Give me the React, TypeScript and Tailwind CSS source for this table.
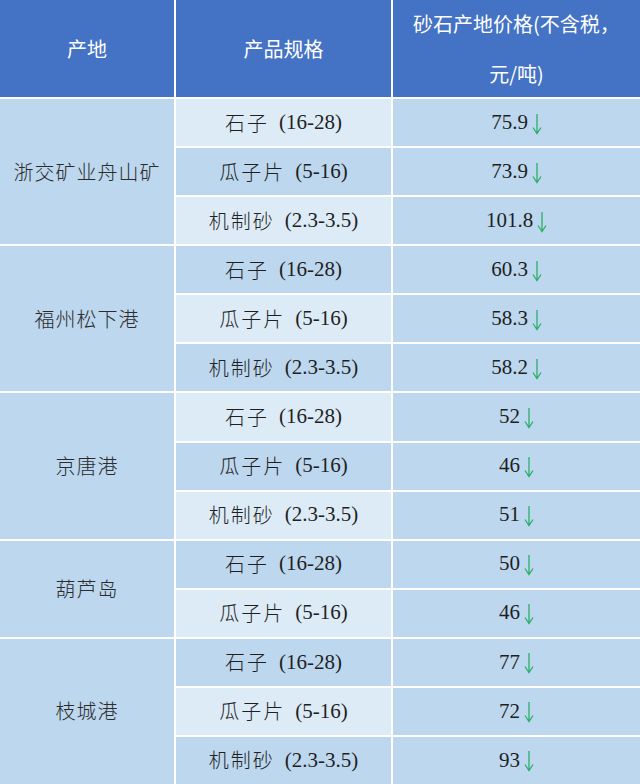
import React from 'react';

type Group = { origin: string; items: { spec: string; range: string; price: string }[] };

const groups: Group[] = [
  {
    origin: '浙交矿业舟山矿',
    items: [
      { spec: '石子', range: '(16-28)', price: '75.9' },
      { spec: '瓜子片', range: '(5-16)', price: '73.9' },
      { spec: '机制砂', range: '(2.3-3.5)', price: '101.8' },
    ],
  },
  {
    origin: '福州松下港',
    items: [
      { spec: '石子', range: '(16-28)', price: '60.3' },
      { spec: '瓜子片', range: '(5-16)', price: '58.3' },
      { spec: '机制砂', range: '(2.3-3.5)', price: '58.2' },
    ],
  },
  {
    origin: '京唐港',
    items: [
      { spec: '石子', range: '(16-28)', price: '52' },
      { spec: '瓜子片', range: '(5-16)', price: '46' },
      { spec: '机制砂', range: '(2.3-3.5)', price: '51' },
    ],
  },
  {
    origin: '葫芦岛',
    items: [
      { spec: '石子', range: '(16-28)', price: '50' },
      { spec: '瓜子片', range: '(5-16)', price: '46' },
    ],
  },
  {
    origin: '枝城港',
    items: [
      { spec: '石子', range: '(16-28)', price: '77' },
      { spec: '瓜子片', range: '(5-16)', price: '72' },
      { spec: '机制砂', range: '(2.3-3.5)', price: '93' },
    ],
  },
];

const spanClass: Record<number, string> = { 2: 'row-span-2', 3: 'row-span-3' };

const DownArrow = () => (
  <svg width="10" height="22" viewBox="0 0 10 22" className="ml-[4px] mt-[2px]" fill="none">
    <path d="M5 1 V20 M1 14.5 L5 20.5 L9 14.5" stroke="#2fae6b" strokeWidth="1.3" />
  </svg>
);

export default function App() {
  let rowIdx = 0;
  return (
    <div className="w-[640px] h-[784px] bg-white grid grid-cols-[174px_215px_1fr] grid-rows-[97px_repeat(14,1fr)] gap-[2px] text-[#1f1f1f]">
      {/* header */}
      <div className="bg-[#4472c4] text-white flex items-center justify-center text-[20px] font-['Noto_Sans_CJK_SC',sans-serif]">
        产地
      </div>
      <div className="bg-[#4472c4] text-white flex items-center justify-center text-[20px] font-['Noto_Sans_CJK_SC',sans-serif]">
        产品规格
      </div>
      <div className="bg-[#4472c4] text-white flex flex-col items-center justify-center text-[20px] leading-[50px] font-['Noto_Sans_CJK_SC',sans-serif]">
        <span>砂石产地价格(不含税，</span>
        <span>元/吨)</span>
      </div>

      {groups.map((g) => (
        <React.Fragment key={g.origin}>
          <div
            className={`${spanClass[g.items.length]} bg-[#bdd7ee] flex items-center justify-center text-[20px] text-[#2b2b2b] tracking-[1px] font-['Noto_Sans_CJK_SC',sans-serif] font-light`}
          >
            {g.origin}
          </div>
          {g.items.map((it) => {
            const light = rowIdx++ % 2 === 0;
            return (
              <React.Fragment key={it.spec}>
                <div
                  className={`${light ? 'bg-[#ddebf7]' : 'bg-[#bdd7ee]'} flex items-center justify-center text-[20px]`}
                >
                  <span className="font-['Noto_Sans_CJK_SC',sans-serif] font-light tracking-[2px]">{it.spec}</span>
                  <span className="ml-[10px] font-['Liberation_Serif',serif] text-[21px]">{it.range}</span>
                </div>
                <div className="bg-[#bdd7ee] flex items-center justify-center">
                  <span className="font-['Liberation_Serif',serif] text-[21px]">{it.price}</span>
                  <DownArrow />
                </div>
              </React.Fragment>
            );
          })}
        </React.Fragment>
      ))}
    </div>
  );
}
